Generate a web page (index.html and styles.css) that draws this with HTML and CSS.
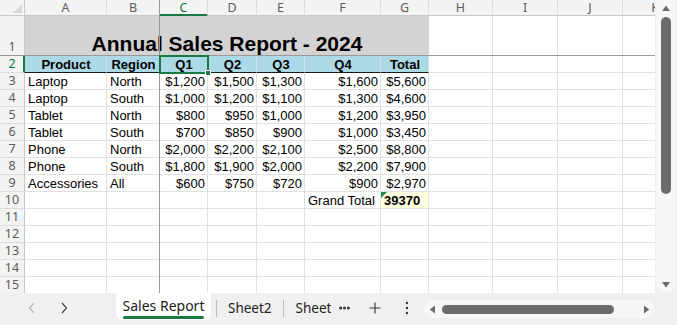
FILE: index.html
```html
<!DOCTYPE html>
<html>
<head>
<meta charset="utf-8">
<link rel="stylesheet" href="styles.css">
</head>
<body>
<div class="app">
  <div class="sheet-area">
    <div class="grid-wrap">
      <div class="grid">
        <div class="corner"><span class="corner-tri"></span></div>
        <div class="ch">A</div><div class="ch">B</div><div class="ch sel">C</div><div class="ch">D</div><div class="ch">E</div><div class="ch">F</div><div class="ch">G</div><div class="ch">H</div><div class="ch">I</div><div class="ch">J</div><div class="ch">K</div>

        <div class="rh">1</div>
        <div class="title">Annual Sales Report - 2024</div>
        <div class="c"></div><div class="c"></div><div class="c"></div><div class="c"></div>

        <div class="rh sel">2</div>
        <div class="c hd">Product</div><div class="c hd">Region</div><div class="c hd">Q1</div><div class="c hd">Q2</div><div class="c hd">Q3</div><div class="c hd">Q4</div><div class="c hd">Total</div>
        <div class="c"></div><div class="c"></div><div class="c"></div><div class="c"></div>

        <div class="rh">3</div>
        <div class="c">Laptop</div><div class="c">North</div><div class="c n">$1,200</div><div class="c n">$1,500</div><div class="c n">$1,300</div><div class="c n">$1,600</div><div class="c n">$5,600</div>
        <div class="c"></div><div class="c"></div><div class="c"></div><div class="c"></div>

        <div class="rh">4</div>
        <div class="c">Laptop</div><div class="c">South</div><div class="c n">$1,000</div><div class="c n">$1,200</div><div class="c n">$1,100</div><div class="c n">$1,300</div><div class="c n">$4,600</div>
        <div class="c"></div><div class="c"></div><div class="c"></div><div class="c"></div>

        <div class="rh">5</div>
        <div class="c">Tablet</div><div class="c">North</div><div class="c n">$800</div><div class="c n">$950</div><div class="c n">$1,000</div><div class="c n">$1,200</div><div class="c n">$3,950</div>
        <div class="c"></div><div class="c"></div><div class="c"></div><div class="c"></div>

        <div class="rh">6</div>
        <div class="c">Tablet</div><div class="c">South</div><div class="c n">$700</div><div class="c n">$850</div><div class="c n">$900</div><div class="c n">$1,000</div><div class="c n">$3,450</div>
        <div class="c"></div><div class="c"></div><div class="c"></div><div class="c"></div>

        <div class="rh">7</div>
        <div class="c">Phone</div><div class="c">North</div><div class="c n">$2,000</div><div class="c n">$2,200</div><div class="c n">$2,100</div><div class="c n">$2,500</div><div class="c n">$8,800</div>
        <div class="c"></div><div class="c"></div><div class="c"></div><div class="c"></div>

        <div class="rh">8</div>
        <div class="c">Phone</div><div class="c">South</div><div class="c n">$1,800</div><div class="c n">$1,900</div><div class="c n">$2,000</div><div class="c n">$2,200</div><div class="c n">$7,900</div>
        <div class="c"></div><div class="c"></div><div class="c"></div><div class="c"></div>

        <div class="rh">9</div>
        <div class="c">Accessories</div><div class="c">All</div><div class="c n">$600</div><div class="c n">$750</div><div class="c n">$720</div><div class="c n">$900</div><div class="c n">$2,970</div>
        <div class="c"></div><div class="c"></div><div class="c"></div><div class="c"></div>

        <div class="rh">10</div>
        <div class="c"></div><div class="c"></div><div class="c"></div><div class="c"></div><div class="c"></div><div class="c">Grand Total</div><div class="c gt"><span class="err-tri"></span>39370</div>
        <div class="c"></div><div class="c"></div><div class="c"></div><div class="c"></div>

        <div class="rh">11</div>
        <div class="c"></div><div class="c"></div><div class="c"></div><div class="c"></div><div class="c"></div><div class="c"></div><div class="c"></div><div class="c"></div><div class="c"></div><div class="c"></div><div class="c"></div>
        <div class="rh">12</div>
        <div class="c"></div><div class="c"></div><div class="c"></div><div class="c"></div><div class="c"></div><div class="c"></div><div class="c"></div><div class="c"></div><div class="c"></div><div class="c"></div><div class="c"></div>
        <div class="rh">13</div>
        <div class="c"></div><div class="c"></div><div class="c"></div><div class="c"></div><div class="c"></div><div class="c"></div><div class="c"></div><div class="c"></div><div class="c"></div><div class="c"></div><div class="c"></div>
        <div class="rh">14</div>
        <div class="c"></div><div class="c"></div><div class="c"></div><div class="c"></div><div class="c"></div><div class="c"></div><div class="c"></div><div class="c"></div><div class="c"></div><div class="c"></div><div class="c"></div>
        <div class="rh">15</div>
        <div class="c"></div><div class="c"></div><div class="c"></div><div class="c"></div><div class="c"></div><div class="c"></div><div class="c"></div><div class="c"></div><div class="c"></div><div class="c"></div><div class="c"></div>
      </div>
      <div class="freeze-v"></div>
      <div class="freeze-h"></div>
      <div class="selection"><span class="handle"></span></div>
    </div>
    <div class="vscroll">
      <div class="vtrack">
        <svg class="arrow-up" width="10" height="8" viewBox="0 0 10 8"><path d="M1 7 L5 1.5 L9 7 Z" fill="#6b6b6b"/></svg>
        <div class="vthumb"></div>
        <svg class="arrow-down" width="10" height="8" viewBox="0 0 10 8"><path d="M1 1 L9 1 L5 6.5 Z" fill="#6b6b6b"/></svg>
      </div>
    </div>
  </div>
  <div class="tabbar">
    <div class="nav">
      <div class="navbtn"><svg width="10" height="12" viewBox="0 0 10 12"><path d="M7 1 L2.5 6 L7 11" fill="none" stroke="#b8b8b8" stroke-width="1.2"/></svg></div>
      <div class="navbtn"><svg width="10" height="12" viewBox="0 0 10 12"><path d="M3 1 L7.5 6 L3 11" fill="none" stroke="#444" stroke-width="1.2"/></svg></div>
    </div>
    <div class="tab active"><span class="tab-label">Sales Report</span></div>
    <div class="sep"></div>
    <div class="tab">Sheet2</div>
    <div class="sep"></div>
    <div class="tab clipped">Sheet3</div>
    <div class="iconbtn dots"><svg width="11" height="4" viewBox="0 0 11 4"><circle cx="1.6" cy="2" r="1.5" fill="#333"/><circle cx="5.5" cy="2" r="1.5" fill="#333"/><circle cx="9.4" cy="2" r="1.5" fill="#333"/></svg></div>
    <div class="iconbtn"><svg width="12" height="12" viewBox="0 0 12 12"><path d="M6 0.5 V11.5 M0.5 6 H11.5" stroke="#333" stroke-width="1.1"/></svg></div>
    <div class="iconbtn"><svg width="4" height="14" viewBox="0 0 4 14"><circle cx="2" cy="2" r="1.2" fill="#333"/><circle cx="2" cy="7" r="1.2" fill="#333"/><circle cx="2" cy="12" r="1.2" fill="#333"/></svg></div>
    <div class="hscroll">
      <svg class="arrow-left" width="7" height="9" viewBox="0 0 7 9"><path d="M6 0.5 L6 8.5 L0.8 4.5 Z" fill="#6b6b6b"/></svg>
      <div class="hthumb"></div>
      <svg class="arrow-right" width="7" height="9" viewBox="0 0 7 9"><path d="M1 0.5 L1 8.5 L6.2 4.5 Z" fill="#6b6b6b"/></svg>
    </div>
    <div class="corner-fill"></div>
  </div>
</div>
</body>
</html>
```

FILE: styles.css
```css
* { box-sizing: border-box; }
html, body { margin: 0; padding: 0; }
body {
  width: 677px;
  height: 325px;
  overflow: hidden;
  background: #f0f0f0;
  font-family: "Liberation Sans", Arial, sans-serif;
}
.app {
  display: flex;
  flex-direction: column;
  width: 677px;
  height: 325px;
}
.sheet-area {
  display: flex;
  height: 293px;
}
.grid-wrap {
  position: relative;
  width: 655px;
  height: 293px;
  overflow: hidden;
  background: #fff;
}
.grid {
  display: grid;
  grid-template-columns: 25px 82px 53px 48px 49px 48px 76px 48px 64px 65px 65px 65px;
  grid-template-rows: 16px 40px 17px repeat(13, 17px);
  width: 688px;
}
.corner {
  position: relative;
  background: #f3f3f3;
  border-right: 1px solid #c8c8c8;
  border-bottom: 1px solid #c8c8c8;
}
.corner-tri {
  position: absolute;
  right: 2px;
  bottom: 2px;
  width: 0;
  height: 0;
  border-left: 9px solid transparent;
  border-bottom: 9px solid #d8d8d8;
}
.ch {
  background: #f3f3f3;
  border-right: 1px solid #dcdcdc;
  border-bottom: 1px solid #c8c8c8;
  font-family: "Noto Sans", "Open Sans", sans-serif;
  font-size: 12.5px;
  line-height: 15px;
  color: #5c5c5c;
  text-align: center;
  white-space: nowrap;
}
.ch.sel {
  color: #117a3f;
  border-bottom-color: #1a7a43;
  box-shadow: inset 0 -1px 0 #1a7a43;
}
.rh {
  background: #f3f3f3;
  border-right: 1px solid #c8c8c8;
  border-bottom: 1px solid #dcdcdc;
  font-family: "Noto Sans", "Open Sans", sans-serif;
  font-size: 12.5px;
  color: #5c5c5c;
  display: flex;
  align-items: flex-end;
  justify-content: center;
  line-height: 16px;
  padding-top: 1px;
}
.rh.sel {
  color: #117a3f;
  border-right: 2px solid #1a7a43;
  padding-left: 1px;
}
.c {
  border-right: 1px solid #e1e1e1;
  border-bottom: 1px solid #e1e1e1;
  font-size: 13px;
  line-height: 16px;
  color: #000;
  padding: 1px 2px 0 3px;
  white-space: nowrap;
  overflow: hidden;
}
.c.n { text-align: right; }
.c.hd {
  background: #add8e6;
  font-weight: bold;
  text-align: center;
  border-right-color: #c9e3ec;
  border-bottom: 1px solid #1a1a1a;
}
.title {
  grid-column: 2 / 9;
  background: #d3d3d3;
  border-bottom: 1px solid #d3d3d3;
  font-weight: bold;
  font-size: 21px;
  line-height: 22px;
  display: flex;
  align-items: flex-end;
  justify-content: center;
  white-space: nowrap;
  color: #000;
}
.c.gt {
  position: relative;
  background: #ffffe0;
  font-weight: bold;
  border-right-color: #ececd0;
}
.err-tri {
  position: absolute;
  left: 0;
  top: 0;
  width: 0;
  height: 0;
  border-top: 6px solid #1f8a4a;
  border-right: 6px solid transparent;
}
.freeze-v {
  position: absolute;
  left: 159px;
  top: 0;
  width: 1px;
  height: 293px;
  background: #9a9a9a;
}
.freeze-h {
  position: absolute;
  left: 0;
  top: 55px;
  width: 655px;
  height: 1px;
  background: #9a9a9a;
}
.selection {
  position: absolute;
  left: 159px;
  top: 55px;
  width: 50px;
  height: 19px;
  border: 2px solid #1a7a43;
}
.handle {
  position: absolute;
  right: -4px;
  bottom: -4px;
  width: 6px;
  height: 6px;
  background: #1a7a43;
  border: 1px solid #fff;
}
.vscroll {
  width: 22px;
  height: 293px;
  background: #f0f0f0;
  padding: 0 1px 0 1px;
}
.vtrack {
  position: relative;
  height: 293px;
  background: #f7f7f7;
  border-radius: 0 0 9px 9px;
  display: flex;
  flex-direction: column;
  align-items: center;
}
.arrow-up { margin-top: 4px; }
.vthumb {
  margin-top: 5px;
  width: 10px;
  height: 177px;
  border-radius: 5px;
  background: #6b6b6b;
}
.arrow-down { margin-top: auto; margin-bottom: 4px; }
.tabbar {
  display: flex;
  align-items: flex-start;
  height: 32px;
  background: #f0f0f0;
  font-family: "Noto Sans", "Open Sans", sans-serif;
  font-size: 13.5px;
  color: #222;
}
.nav {
  display: flex;
  width: 116px;
  padding-left: 16px;
  height: 30px;
  align-items: center;
}
.navbtn {
  width: 32px;
  height: 24px;
  display: flex;
  align-items: center;
  justify-content: center;
}
.tab {
  height: 30px;
  display: flex;
  align-items: center;
  white-space: nowrap;
  padding: 0 11px;
}
.tab.active {
  position: relative;
  width: 95px;
  height: 27px;
  background: #fff;
  border-radius: 0 0 6px 6px;
  justify-content: center;
  padding: 0 0 3px 0;
  color: #1b1b1b;
}
.tab-label {
  position: relative;
  font-size: 14px;
}
.tab-label::after {
  content: "";
  position: absolute;
  left: 0;
  right: 0;
  bottom: -4px;
  height: 3px;
  border-radius: 2px;
  background: #1a7a43;
}
.sep {
  width: 1px;
  height: 17px;
  margin-top: 7px;
  background: #bdbdbd;
}
.active + .sep { margin-left: 5px; }
.tab.clipped {
  width: 47px;
  overflow: hidden;
  padding: 0 0 0 12px;
  display: block;
  line-height: 30px;
}
.iconbtn {
  width: 32px;
  height: 30px;
  display: flex;
  align-items: center;
  justify-content: center;
  color: #333;
}
.iconbtn.dots {
  width: 28px;
}
.hscroll {
  position: relative;
  margin-top: 7px;
  margin-left: 1px;
  width: 230px;
  height: 18px;
  background: #f7f7f7;
  border-radius: 9px;
  display: flex;
  align-items: center;
  padding: 0 4px 0 5px;
}
.hthumb {
  margin-left: 6px;
  width: 172px;
  height: 9px;
  border-radius: 5px;
  background: #6b6b6b;
}
.arrow-right { margin-left: auto; }
.corner-fill { flex: 1; }
```
